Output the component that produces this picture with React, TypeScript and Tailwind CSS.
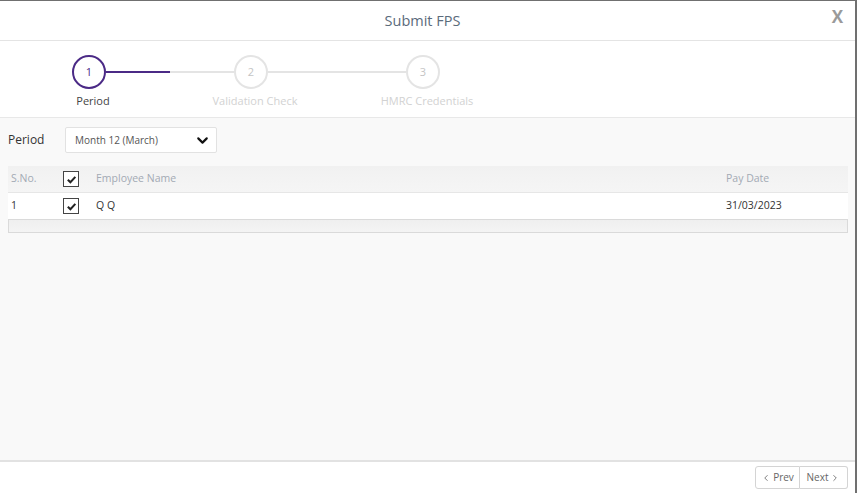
import { ChevronDown, ChevronLeft, ChevronRight } from "lucide-react";

const STEPS = [
  { n: 1, label: "Period", active: true, line: 128 },
  { n: 2, label: "Validation Check", active: false, line: 138 },
  { n: 3, label: "HMRC Credentials", active: false, line: 0 },
];

function Check() {
  return (
    <span className="flex h-[16px] w-[16px] items-center justify-center border-[1.5px] border-[#444] bg-white">
      <svg viewBox="0 0 12 12" className="h-[11px] w-[11px]">
        <path d="M2 6.2 L4.8 9 L10.2 3.2" fill="none" stroke="#222" strokeWidth="2.2" />
      </svg>
    </span>
  );
}

export default function App() {
  return (
    <div
      className="flex h-[493px] w-[857px] flex-col overflow-hidden border-t border-r-2 border-[#707070] bg-white text-[#333]"
      style={{ fontFamily: '"Open Sans", Lato, sans-serif' }}
    >
      {/* header */}
      <div className="relative flex h-[40px] shrink-0 items-center justify-center border-b border-[#e4e4e4] pr-[10px]">
        <h1 className="text-[14.5px] font-medium text-[#5b6b7b]">Submit FPS</h1>
        <span className="absolute right-[12px] top-[3px] text-[17px] font-bold text-[#9a9a9a]">X</span>
      </div>

      {/* stepper */}
      <div className="flex h-[77px] shrink-0 border-b border-[#e8e8e8] pl-[72px] pt-[14px]">
        {STEPS.map((s, i) => (
          <div key={s.n} className="flex">
            <div className="flex w-[34px] flex-col items-center">
              <div
                className={
                  s.active
                    ? "flex h-[34px] w-[34px] shrink-0 items-center justify-center rounded-full border-2 border-[#4b2a86] text-[11px] text-[#4b2a86]"
                    : "flex h-[34px] w-[34px] shrink-0 items-center justify-center rounded-full border-2 border-[#e4e4e4] text-[11px] text-[#c4c4c4]"
                }
              >
                {s.n}
              </div>
              <span
                className={
                  s.active
                    ? "mt-[4px] ml-[8px] whitespace-nowrap text-[11px] text-[#444]"
                    : "mt-[4px] ml-[8px] whitespace-nowrap text-[11px] text-[#d2d2d2]"
                }
              >
                {s.label}
              </span>
            </div>
            {s.line > 0 && (
              <div className="mt-[16px] flex h-[2px]" style={{ width: s.line }}>
                {i === 0 ? (
                  <>
                    <div className="h-full w-[64px] bg-[#4b2a86]" />
                    <div className="h-full flex-1 bg-[#e4e4e4]" />
                  </>
                ) : (
                  <div className="h-full flex-1 bg-[#e4e4e4]" />
                )}
              </div>
            )}
          </div>
        ))}
      </div>

      {/* content */}
      <div className="flex flex-1 flex-col bg-[#f9f9f9] px-[8px] pt-[9px]">
        <div className="flex items-center">
          <span className="w-[57px] text-[12px] text-[#333]">Period</span>
          <div className="flex h-[26px] w-[152px] items-center justify-between rounded-[2px] border border-[#e2e2e2] bg-white pl-[9px] pr-[5px]">
            <span className="text-[10px] text-[#555]">Month 12 (March)</span>
            <ChevronDown size={17} strokeWidth={3} className="text-[#111]" />
          </div>
        </div>

        <div className="mt-[13px] w-[840px]">
          <div className="flex h-[27px] items-center border-b border-[#e6e6e6] bg-gradient-to-b from-[#f1f1f1] to-[#f5f5f5] text-[10.5px] text-[#a3aab4]">
            <span className="w-[55px] pl-[3px]">S.No.</span>
            <span className="w-[33px]"><Check /></span>
            <span className="flex-1">Employee Name</span>
            <span className="w-[122px]">Pay Date</span>
          </div>
          <div className="flex h-[26px] items-center bg-white text-[10.5px] text-[#333]">
            <span className="w-[55px] pl-[3px]">1</span>
            <span className="w-[33px]"><Check /></span>
            <span className="flex-1">Q Q</span>
            <span className="w-[122px]">31/03/2023</span>
          </div>
          <div className="h-[14px] border border-[#dadada] bg-gradient-to-b from-[#efefef] to-[#f4f4f4]" />
        </div>
      </div>

      {/* footer */}
      <div className="flex h-[33px] shrink-0 items-center justify-end border-t-2 border-[#e2e2e2] pr-[7px]">
        <button className="flex h-[23px] w-[45px] items-center justify-center gap-[2px] rounded-l-[3px] border border-[#d4d4d4] bg-white text-[10px] text-[#666]">
          <ChevronLeft size={10} strokeWidth={2} />
          Prev
        </button>
        <button className="flex h-[23px] w-[48px] items-center justify-center gap-[2px] rounded-r-[3px] border border-l-0 border-[#d4d4d4] bg-white text-[10px] text-[#666]">
          Next
          <ChevronRight size={10} strokeWidth={2} />
        </button>
      </div>
    </div>
  );
}
